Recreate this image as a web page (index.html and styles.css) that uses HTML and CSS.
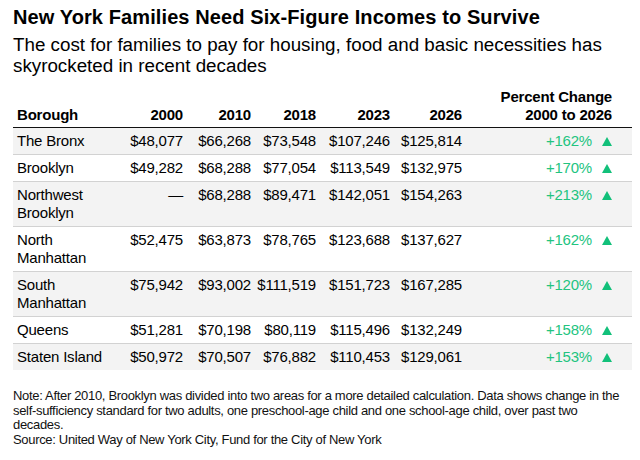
FILE: index.html
```html
<!DOCTYPE html>
<html lang="en">
<head>
<meta charset="utf-8">
<title>New York Families Need Six-Figure Incomes to Survive</title>
<link rel="stylesheet" href="styles.css">
</head>
<body>
<div class="page">
  <h1 class="title">New York Families Need Six-Figure Incomes to Survive</h1>
  <p class="subtitle">The cost for families to pay for housing, food and basic necessities has skyrocketed in recent decades</p>
  <table class="data">
    <colgroup>
      <col class="c-borough"><col class="c-2000"><col class="c-2010"><col class="c-2018"><col class="c-2023"><col class="c-2026"><col class="c-pct">
    </colgroup>
    <thead>
      <tr>
        <th class="name">Borough</th>
        <th class="num">2000</th>
        <th class="num">2010</th>
        <th class="num">2018</th>
        <th class="num">2023</th>
        <th class="num">2026</th>
        <th class="pct">Percent Change<br>2000 to 2026</th>
      </tr>
    </thead>
    <tbody>
      <tr class="shade">
        <td class="name">The Bronx</td><td class="num">$48,077</td><td class="num">$66,268</td><td class="num">$73,548</td><td class="num">$107,246</td><td class="num">$125,814</td><td class="pct"><span class="chg">+162%</span><span class="up"></span></td>
      </tr>
      <tr>
        <td class="name">Brooklyn</td><td class="num">$49,282</td><td class="num">$68,288</td><td class="num">$77,054</td><td class="num">$113,549</td><td class="num">$132,975</td><td class="pct"><span class="chg">+170%</span><span class="up"></span></td>
      </tr>
      <tr class="shade">
        <td class="name">Northwest Brooklyn</td><td class="num">—</td><td class="num">$68,288</td><td class="num">$89,471</td><td class="num">$142,051</td><td class="num">$154,263</td><td class="pct"><span class="chg">+213%</span><span class="up"></span></td>
      </tr>
      <tr>
        <td class="name">North Manhattan</td><td class="num">$52,475</td><td class="num">$63,873</td><td class="num">$78,765</td><td class="num">$123,688</td><td class="num">$137,627</td><td class="pct"><span class="chg">+162%</span><span class="up"></span></td>
      </tr>
      <tr class="shade">
        <td class="name">South Manhattan</td><td class="num">$75,942</td><td class="num">$93,002</td><td class="num">$111,519</td><td class="num">$151,723</td><td class="num">$167,285</td><td class="pct"><span class="chg">+120%</span><span class="up"></span></td>
      </tr>
      <tr>
        <td class="name">Queens</td><td class="num">$51,281</td><td class="num">$70,198</td><td class="num">$80,119</td><td class="num">$115,496</td><td class="num">$132,249</td><td class="pct"><span class="chg">+158%</span><span class="up"></span></td>
      </tr>
      <tr class="shade last">
        <td class="name">Staten Island</td><td class="num">$50,972</td><td class="num">$70,507</td><td class="num">$76,882</td><td class="num">$110,453</td><td class="num">$129,061</td><td class="pct"><span class="chg">+153%</span><span class="up"></span></td>
      </tr>
    </tbody>
  </table>
  <p class="note">Note: After 2010, Brooklyn was divided into two areas for a more detailed calculation. Data shows change in the self-sufficiency standard for two adults, one preschool-age child and one school-age child, over past two decades.<br>Source: United Way of New York City, Fund for the City of New York</p>
</div>
</body>
</html>
```

FILE: styles.css
```css
html, body {
  margin: 0;
  padding: 0;
  background: #ffffff;
}

body {
  font-family: "Liberation Sans", Arial, sans-serif;
  color: #000;
}

.page {
  padding: 5px 8px 0 13px;
}

.title {
  margin: 0;
  font-size: 20px;
  line-height: 24px;
  font-weight: 700;
  letter-spacing: 0.1px;
}

.subtitle {
  margin: 5px 0 0;
  font-size: 18.8px;
  line-height: 21px;
  font-weight: 400;
}

.data {
  margin-top: 8px;
  width: 619px;
  border-collapse: collapse;
  table-layout: fixed;
  font-size: 15px;
  line-height: 18px;
  letter-spacing: -0.2px;
}

.c-borough { width: 107px; }
.c-2000 { width: 63px; }
.c-2010 { width: 68px; }
.c-2018 { width: 65px; }
.c-2023 { width: 74px; }
.c-2026 { width: 72px; }
.c-pct { width: 170px; }

.data th {
  font-weight: 700;
  vertical-align: bottom;
  padding: 4px 0 3px;
  border-bottom: 1px solid #111;
}

.data td {
  vertical-align: top;
  padding: 4px 0;
  border-bottom: 1px solid #d2d2d2;
}

.data tr.last td {
  border-bottom: none;
}

.data tr.shade td {
  background: #f3f3f3;
}

.data .name {
  text-align: left;
  padding-left: 4px;
}

.data .num {
  text-align: right;
}

.data .pct {
  text-align: right;
  padding-right: 20px;
}

.chg {
  color: #22c47f;
}

.up {
  display: inline-block;
  width: 0;
  height: 0;
  margin-left: 10px;
  border-left: 5px solid transparent;
  border-right: 5px solid transparent;
  border-bottom: 9px solid #12c07a;
}

.note {
  margin: 19px 0 0;
  max-width: 612px;
  font-size: 13px;
  line-height: 14.5px;
  letter-spacing: -0.32px;
  color: #111;
}
```
